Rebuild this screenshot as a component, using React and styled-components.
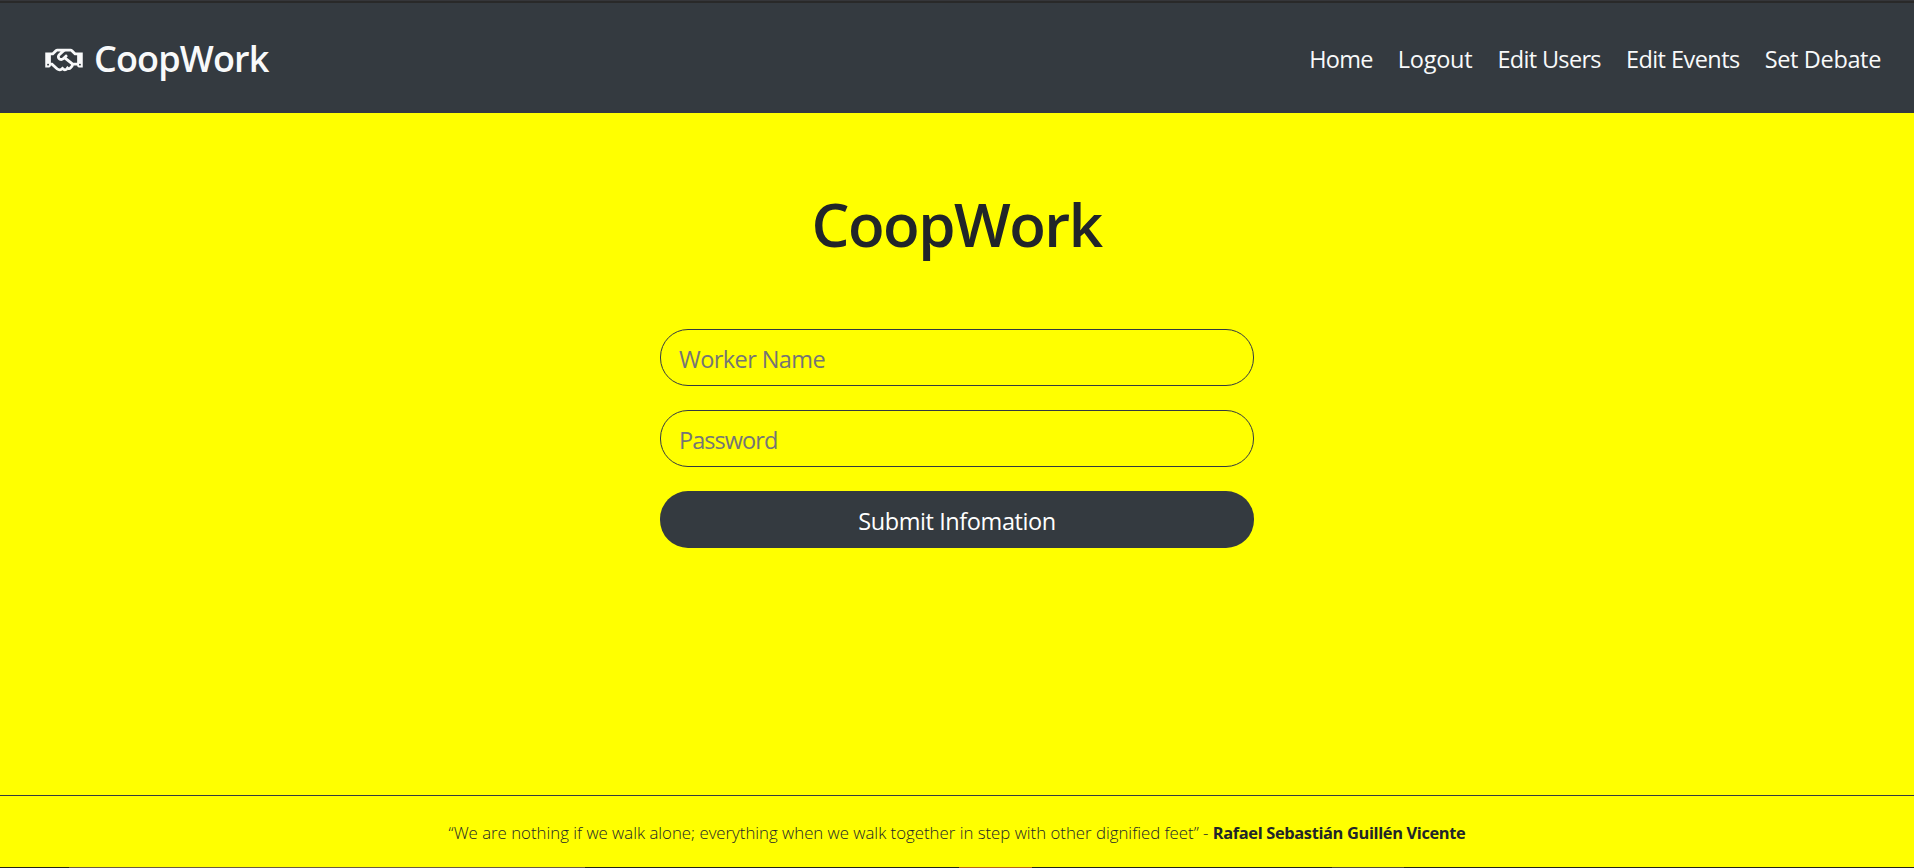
import React from "react";
import styled, { createGlobalStyle } from "styled-components";
import { FaRegHandshake } from "react-icons/fa";

const GlobalStyle = createGlobalStyle`
  *, *::before, *::after { box-sizing: border-box; }
  body {
    margin: 0;
    background: #ffff00;
    color: #212529;
    font-family: "Segoe UI", "Open Sans", "Noto Sans", sans-serif;
    overflow: hidden;
  }
`;

const Page = styled.div`
  height: 100vh;
  display: flex;
  flex-direction: column;
  background: #ffff00;
`;

const TopEdge = styled.div`
  height: 3px;
  flex: none;
  background: #292929;
  border-top: 1px solid #35363a;
`;

const Header = styled.header`
  height: 110px;
  flex: none;
  display: flex;
  align-items: center;
  justify-content: space-between;
  padding: 2px 33px 0 45px;
  background: #343a40;
  color: #f8f9fa;
`;

const Brand = styled.a`
  display: flex;
  align-items: center;
  gap: 11px;
  font-size: 36px;
  line-height: 54px;
  font-weight: 600;
  letter-spacing: -0.85px;
`;

const BrandIcon = styled(FaRegHandshake)`
  width: 38px;
  height: 30px;
  margin-top: 1px;
`;

const Nav = styled.nav`
  display: flex;
  gap: 25px;
`;

const NavLink = styled.a`
  font-size: 23.5px;
  line-height: 36px;
  white-space: nowrap;
  letter-spacing: ${(p) => p.$tracking}px;
`;

const Main = styled.main`
  flex: 1;
  display: flex;
  flex-direction: column;
  align-items: center;
  padding-top: 75px;
`;

const Title = styled.h1`
  margin: 0 1px 0 0;
  font-size: 60px;
  line-height: 72px;
  font-weight: 600;
  letter-spacing: -1.5px;
`;

const Form = styled.form`
  width: 594px;
  margin-top: 69px;
  display: flex;
  flex-direction: column;
  gap: 24px;
`;

const Field = styled.input`
  height: 57px;
  padding: 3px 18px 0;
  border: 1px solid #343a40;
  border-radius: 28px;
  background: transparent;
  font: inherit;
  font-size: 23.5px;
  letter-spacing: ${(p) => p.$tracking}px;
  outline: none;
  &::placeholder { color: #757575; opacity: 1; }
`;

const Submit = styled.button`
  height: 57px;
  padding: 3px 0 0;
  border: 0;
  border-radius: 28px;
  background: #343a40;
  color: #fff;
  font: inherit;
  font-size: 23.5px;
  letter-spacing: -0.42px;
`;

const Footer = styled.footer`
  height: 72px;
  flex: none;
  display: flex;
  align-items: center;
  justify-content: center;
  padding-top: 2px;
  border-top: 1px solid #343a40;
`;

const Quote = styled.p`
  margin: 0;
  font-size: 16.8px;
  font-weight: 300;
  white-space: nowrap;
`;

const Author = styled.strong`
  font-size: 16.4px;
  font-weight: 700;
  letter-spacing: -0.35px;
`;

const BottomEdge = styled.div`
  height: 1px;
  flex: none;
  display: flex;
  background: #24241a;
`;

const EdgeSegment = styled.i`
  width: ${(p) => p.$width}px;
  background: ${(p) => p.$color};
`;

const links = [
  ["Home", -0.7],
  ["Logout", -0.25],
  ["Edit Users", -0.67],
  ["Edit Events", -0.55],
  ["Set Debate", -0.35],
];

const edge = [
  [69, "transparent"],
  [516, "#6b5b45"],
  [374, "transparent"],
  [73, "#b5651d"],
  [300, "transparent"],
  [72, "#524c38"],
];

export default function App() {
  return (
    <Page>
      <GlobalStyle />
      <TopEdge />
      <Header>
        <Brand><BrandIcon /><span>CoopWork</span></Brand>
        <Nav>
          {links.map(([label, tracking]) => (
            <NavLink key={label} $tracking={tracking}>{label}</NavLink>
          ))}
        </Nav>
      </Header>
      <Main>
        <Title>CoopWork</Title>
        <Form onSubmit={(e) => e.preventDefault()}>
          <Field placeholder="Worker Name" $tracking={-0.57} />
          <Field type="password" placeholder="Password" $tracking={-0.95} />
          <Submit>Submit Infomation</Submit>
        </Form>
      </Main>
      <Footer>
        <Quote>
          “We are nothing if we walk alone; everything when we walk together in step with other dignified feet” - <Author>Rafael Sebastián Guillén Vicente</Author>
        </Quote>
      </Footer>
      <BottomEdge>
        {edge.map(([w, c], i) => <EdgeSegment key={i} $width={w} $color={c} />)}
      </BottomEdge>
    </Page>
  );
}
